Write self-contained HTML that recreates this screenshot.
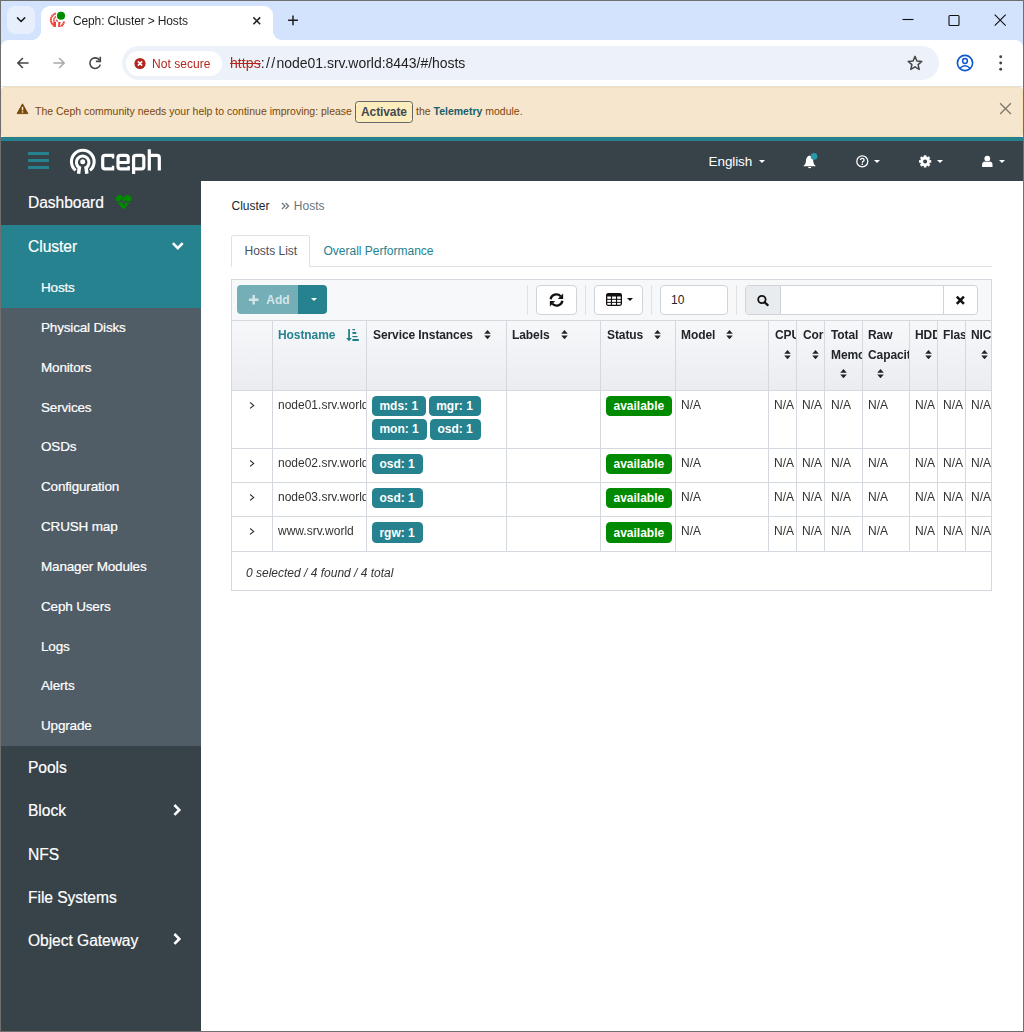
<!DOCTYPE html>
<html>
<head>
<meta charset="utf-8">
<title>Ceph: Cluster > Hosts</title>
<style>
*{box-sizing:border-box;margin:0;padding:0}
html,body{width:1024px;height:1032px;overflow:hidden;background:#fff}
body{font-family:"Liberation Sans",sans-serif;font-size:12px;color:#212529;position:relative}
div,span,svg{position:absolute}
.t{white-space:nowrap;line-height:1}
#frame{left:0;top:0;width:1024px;height:1032px;border:1px solid #6f6f6f;z-index:99}
/* ---------- browser chrome ---------- */
#tabstrip{left:0;top:0;width:1024px;height:52px;background:#d3e3fd}
#tabsearch{left:7px;top:6px;width:28px;height:28px;border-radius:8px;background:#e7effd}
#tab{left:41px;top:6px;width:232px;height:34px;background:#fff;border-radius:9px 9px 0 0}
#tab:before,#tab:after{content:"";position:absolute;bottom:0;width:9px;height:9px}
#tab:before{left:-9px;background:radial-gradient(circle at 0 0,rgba(255,255,255,0) 8.6px,#fff 9.2px)}
#tab:after{right:-9px;background:radial-gradient(circle at 100% 0,rgba(255,255,255,0) 8.6px,#fff 9.2px)}
#tabtitle{will-change:transform;left:73px;top:15px;font-size:12px;color:#1f1f1f;letter-spacing:-0.14px}
#toolbar{left:1px;top:40px;width:1022px;height:46px;background:#fff;border-radius:7.5px 7.5px 0 0}
#omni{left:121.5px;top:46px;width:817px;height:34px;border-radius:17px;background:#edf2fa}
#chip{left:126px;top:51px;width:96px;height:24.5px;border-radius:12.25px;background:#fff}
#chiptxt{will-change:transform;left:152.1px;top:57.5px;font-size:12px;color:#b3261e;letter-spacing:0.05px}
#url{will-change:transform;left:230px;top:56px;font-size:14px;color:#1f1f1f;letter-spacing:0.08px}
#url s{color:#b3261e}
/* ---------- notification ---------- */
#nline{left:0;top:86px;width:1024px;height:1px;background:#dfe2e0}
#notif{left:1px;top:87px;width:1022px;height:50px;background:#f5e6cd;border:1px solid #f6deb6;border-radius:3.5px}
#ntxt{left:35px;top:105.5px;font-size:10.5px;color:#7a470b}
#nbtn{left:355px;top:101px;width:58px;height:22px;border:1px solid #62666a;border-radius:3.5px;background:#fdedbd}
#nbtn span{left:5px;top:4px;font-size:12px;font-weight:bold;color:#424a52;letter-spacing:-0.1px}
#ntxt2{left:416px;top:105.5px;font-size:10.5px;color:#7a470b}
#ntxt2 b{color:#1b5e69}
#tealbar{left:0;top:137px;width:1024px;height:4px;background:#25828e}
/* ---------- navbar ---------- */
#navbar{left:0;top:141px;width:1024px;height:40px;background:#374249}
.caret{width:0;height:0;border-left:3.2px solid transparent;border-right:3.2px solid transparent;border-top:3.2px solid #fff}
.nv{font-size:13.5px;color:#fff}
/* ---------- sidebar ---------- */
#side{left:0;top:181px;width:201px;height:851px;background:#374249}
#cluster{left:0;top:224.5px;width:201px;height:83.3px;background:#25828e}
#submenu{left:0;top:307.8px;width:201px;height:437.8px;background:#505c66}
.top{-webkit-text-stroke:0.2px #fff;left:28px;font-size:15.6px;color:#fff;letter-spacing:-0.05px}
.sub{-webkit-text-stroke:0.2px #fff;left:41px;font-size:13.5px;color:#fff;letter-spacing:-0.17px}
/* ---------- content ---------- */
#content{left:201px;top:181px;width:823px;height:851px;background:#fff}

/* content styles */
.bc{font-size:12px}
#tabline{left:231px;top:266px;width:761px;height:1px;background:#dee2e6}
#acttab{left:231px;top:235px;width:79px;height:32px;border:1px solid #dee2e6;border-bottom:none;border-radius:3px 3px 0 0;background:#fff}
#tbl{left:231px;top:279px;width:761px;height:312px;border:1px solid #d4d8df;background:#fff;overflow:hidden}
#tbar{left:0;top:0;width:759px;height:40px;background:#f7f8fa}
#thead{left:0;top:40px;width:759px;height:71px;border-top:1px solid #d4d8df;border-bottom:1px solid #d4d8df;background:linear-gradient(#f7f8fa,#eaecf0)}
.vl{top:40px;width:1px;height:231px;background:#d4d8df}
.hl{left:0;width:759px;height:1px;background:#d4d8df}
.sep{top:5px;width:1px;height:30px;background:#dfe2e7}
.btnw{background:#fff;border:1px solid #ced4da;border-radius:4px;top:5px;height:30px}
.cell{overflow:hidden;height:60px}
.th{will-change:transform;letter-spacing:-0.09px;font-weight:bold;font-size:12px;color:#212529;line-height:20px;white-space:nowrap;top:0;left:0}
.td{will-change:transform;font-size:12px;color:#333;white-space:nowrap;line-height:1}
.bdg{height:20.4px;border-radius:4.3px;background:#25828e;color:#fff;font-weight:bold;font-size:12px;line-height:20.4px;padding:0 8.3px 0 7.3px;white-space:nowrap}
.bdg.g{background:#008a00}
.srt{width:7px;height:9.3px}
</style>
</head>
<body>
<!-- ================= BROWSER CHROME ================= -->
<div id="tabstrip"></div>
<div id="tabsearch"></div>
<svg style="left:7px;top:6px" width="28" height="28" viewBox="0 0 28 28"><path d="M10.5 11.9 L14.1 15.5 L17.7 11.9" fill="none" stroke="#1f1f1f" stroke-width="1.5" stroke-linecap="round" stroke-linejoin="miter"/></svg>
<div id="tab"></div>
<!-- favicon -->
<svg style="left:49px;top:11px" width="18" height="18" viewBox="0 0 18 18">
  <g fill="none" stroke="#ef4136">
    <path d="M6.9 2.55 A6.55 6.55 0 0 0 4.7 14.3" stroke-width="2.0" stroke-dasharray="1.6 0.3"/>
    <path d="M7.0 5.7 A3.5 3.5 0 0 0 5.5 10.9" stroke-width="1.6" stroke-dasharray="1.6 0.3"/>
    <path d="M7.2 8.8 L8.8 10.6" stroke-width="1.3"/>
    <path d="M12.4 15.2 Q14.4 13.2 15.1 10.4" stroke-width="2.1" stroke-dasharray="1.6 0.3"/>
  </g>
  <rect x="4.3" y="10.8" width="2.7" height="5.1" fill="#ef4136"/>
  <path d="M9.2 11 H12 L11.2 12.2 V14.6 L12 15.9 H9.2 Z" fill="#ef4136"/>
  <circle cx="12" cy="4.8" r="4.05" fill="#008a00"/>
</svg>
<div id="tabtitle" class="t">Ceph: Cluster &gt; Hosts</div>
<svg style="left:250px;top:14px" width="14" height="14" viewBox="0 0 14 14"><path d="M3.4 3.4 L10.2 10.2 M10.2 3.4 L3.4 10.2" stroke="#1f1f1f" stroke-width="1.5" fill="none"/></svg>
<svg style="left:285px;top:12px" width="16" height="16" viewBox="0 0 16 16"><path d="M8 3.4 V13.2 M3.1 8.3 H12.9" stroke="#1f1f1f" stroke-width="1.5" fill="none"/></svg>
<!-- window controls -->
<svg style="left:896px;top:8px" width="120" height="24" viewBox="0 0 120 24">
  <path d="M6.5 11.5 H17.5" stroke="#111" stroke-width="1.1" fill="none"/>
  <rect x="53" y="7.5" width="10" height="10" rx="1" fill="none" stroke="#111" stroke-width="1.1"/>
  <path d="M98.7 6.7 L109.7 17.7 M109.7 6.7 L98.7 17.7" stroke="#111" stroke-width="1.1" fill="none"/>
</svg>
<div id="toolbar"></div>
<!-- back / forward / reload -->
<svg style="left:14px;top:54px" width="18" height="18" viewBox="0 0 18 18"><path d="M14.6 9 H4.2 M8.9 4 L3.9 9 L8.9 14" fill="none" stroke="#444746" stroke-width="1.6" stroke-linejoin="miter"/></svg>
<svg style="left:50px;top:54px" width="18" height="18" viewBox="0 0 18 18"><path d="M3.4 9 H13.8 M9.1 4 L14.1 9 L9.1 14" fill="none" stroke="#a8abaa" stroke-width="1.6"/></svg>
<svg style="left:86px;top:54px" width="18" height="18" viewBox="0 0 18 18"><path d="M13.6 6.2 A5.3 5.3 0 1 0 14.3 10.6" fill="none" stroke="#444746" stroke-width="1.6"/><path d="M14.3 2.8 V7.4 H9.9" fill="none" stroke="#444746" stroke-width="1.6"/></svg>
<div id="omni"></div>
<div id="chip"></div>
<svg style="left:133px;top:57px" width="14" height="14" viewBox="0 0 14 14"><circle cx="7" cy="6.5" r="5.6" fill="#b3261e"/><path d="M4.9 4.4 L9.1 8.6 M9.1 4.4 L4.9 8.6" stroke="#fff" stroke-width="1.5"/></svg>
<div id="chiptxt" class="t">Not secure</div>
<div id="url" class="t"><s>https</s><span style="position:static;letter-spacing:1.38px">://</span><span style="position:static;letter-spacing:-0.03px">node01.srv.world:8443/#/hosts</span></div>
<!-- star -->
<svg style="left:906px;top:54px" width="18" height="18" viewBox="0 0 18 18"><path d="M9 2.4 L10.9 7.0 L15.8 7.4 L12.1 10.6 L13.2 15.4 L9 12.8 L4.8 15.4 L5.9 10.6 L2.2 7.4 L7.1 7.0 Z" fill="none" stroke="#444746" stroke-width="1.5" stroke-linejoin="round"/></svg>
<!-- profile -->
<svg style="left:955px;top:53px" width="20" height="20" viewBox="0 0 20 20"><circle cx="10" cy="10" r="7.6" fill="none" stroke="#0b57d0" stroke-width="1.6"/><circle cx="10" cy="8" r="2.4" fill="none" stroke="#0b57d0" stroke-width="1.5"/><path d="M4.9 15.2 Q10 10.4 15.1 15.2" fill="none" stroke="#0b57d0" stroke-width="1.5"/></svg>
<svg style="left:996px;top:53px" width="10" height="20" viewBox="0 0 10 20"><circle cx="4.7" cy="3.7" r="1.45" fill="#444746"/><circle cx="4.7" cy="10" r="1.45" fill="#444746"/><circle cx="4.7" cy="16.3" r="1.45" fill="#444746"/></svg>

<!-- ================= NOTIFICATION ================= -->
<div id="nline"></div><div id="notif"></div>
<svg style="left:15.6px;top:102.6px" width="13" height="12.1" viewBox="0 0 14 13"><path d="M7 0.9 L12.8 11.4 H1.2 Z" fill="#7a470b" stroke="#7a470b" stroke-width="1" stroke-linejoin="round"/><rect x="6.2" y="4.1" width="1.6" height="3.9" fill="#f5e6cd"/><rect x="6.2" y="8.9" width="1.6" height="1.5" fill="#f5e6cd"/></svg>
<div id="ntxt" class="t">The Ceph community needs your help to continue improving: please</div>
<div id="nbtn"><span class="t">Activate</span></div>
<div id="ntxt2" class="t">the <b>Telemetry</b> module.</div>
<svg style="left:998px;top:101px" width="14" height="14" viewBox="0 0 14 14"><path d="M2.1 2.2 L12.9 13 M12.9 2.2 L2.1 13" stroke="#7d776c" stroke-width="1.3" fill="none"/></svg>
<div id="tealbar"></div>

<!-- ================= NAVBAR ================= -->
<div id="navbar"></div>
<div style="left:28px;top:152.3px;width:21px;height:3px;background:#25828e;border-radius:.5px"></div>
<div style="left:28px;top:159px;width:21px;height:3px;background:#25828e;border-radius:.5px"></div>
<div style="left:28px;top:165.6px;width:21px;height:3px;background:#25828e;border-radius:.5px"></div>
<!-- ceph logo -->
<svg style="left:66px;top:144px" width="100" height="34" viewBox="66 144 100 34" fill="none" stroke="#fff" stroke-linecap="butt">
  <path d="M75.6 170.4 A11.35 11.35 0 1 1 90.0 170.4" stroke-width="3.05"/>
  <path d="M79.3 167.6 A6.3 6.3 0 1 1 86.1 167.6" stroke-width="3.1"/>
  <path d="M78.55 173.8 L79.5 166.2 M86.85 173.8 L85.9 166.2" stroke-width="3.5"/>
  <circle cx="82.7" cy="161.8" r="2.5" fill="#fff" stroke="none"/>
  <g stroke-width="3.2" stroke-linejoin="round">
    <path d="M114.2 155.3 H105.1 Q102.7 155.3 102.7 157.7 V166.5 Q102.7 168.9 105.1 168.9 H114.2"/>
    <path d="M113.0 155.3 V158.4 M113.0 168.9 V165.8" stroke-width="2.4"/>
    <path d="M129.8 168.9 H120.4 Q118.0 168.9 118.0 166.5 V157.7 Q118.0 155.3 120.4 155.3 H125.8 Q128.2 155.3 128.2 157.7 V162.5 H118.0"/>
    <path d="M128.6 168.9 V166.0" stroke-width="2.4"/>
    <path d="M133.6 173.9 V157.7 Q133.6 155.3 136.0 155.3 H141.4 Q143.8 155.3 143.8 157.7 V166.5 Q143.8 168.9 141.4 168.9 H133.6"/>
    <path d="M149.3 149.3 V170.5 M149.3 155.3 H156.9 Q159.3 155.3 159.3 157.7 V170.5"/>
  </g>
</svg>
<div class="t nv" style="left:708.6px;top:155px;letter-spacing:-0.1px">English</div>
<div class="caret" style="left:759px;top:160px"></div>
<!-- bell -->
<svg style="left:800px;top:150px" width="22" height="22" viewBox="0 0 22 22"><path d="M9.6 5.6 Q5.9 6.6 5.9 11.4 Q5.9 14.2 3.3 16.2 H15.9 Q13.3 14.2 13.3 11.4 Q13.3 6.6 9.6 5.6 Z" fill="#fff"/><path d="M8 17 A1.7 1.7 0 0 0 11.3 17 Z" fill="#fff"/><circle cx="14" cy="6.4" r="3.3" fill="#2b99a8"/></svg>
<!-- question -->
<svg style="left:855px;top:154px" width="15" height="15" viewBox="0 0 15 15"><circle cx="7.3" cy="7.4" r="5.5" fill="none" stroke="#fff" stroke-width="1.25"/><path d="M5.5 6.1 Q5.5 4.3 7.3 4.3 Q9.1 4.3 9.1 5.9 Q9.1 6.9 8.1 7.4 Q7.3 7.8 7.3 8.7" fill="none" stroke="#fff" stroke-width="1.3"/><rect x="6.6" y="9.5" width="1.4" height="1.4" fill="#fff"/></svg>
<div class="caret" style="left:874px;top:160px"></div>
<!-- gear -->
<svg style="left:918px;top:154px" width="15" height="15" viewBox="0 0 15 15"><g transform="translate(7.1 7.4)"><circle r="3.5" fill="none" stroke="#fff" stroke-width="2.6"/><g fill="#fff"><rect x="-1.3" y="-6.1" width="2.6" height="12.2"/><rect x="-1.3" y="-6.1" width="2.6" height="12.2" transform="rotate(45)"/><rect x="-1.3" y="-6.1" width="2.6" height="12.2" transform="rotate(90)"/><rect x="-1.3" y="-6.1" width="2.6" height="12.2" transform="rotate(135)"/></g><circle r="2" fill="#374249"/></g></svg>
<div class="caret" style="left:937px;top:160px"></div>
<!-- user -->
<svg style="left:980px;top:154px" width="15" height="15" viewBox="0 0 15 15"><circle cx="7.3" cy="4.6" r="2.9" fill="#fff"/><path d="M2.1 13 V10.6 Q2.1 7.6 5 7.4 Q7.3 8.6 9.6 7.4 Q12.5 7.6 12.5 10.6 V13 Z" fill="#fff"/></svg>
<div class="caret" style="left:999px;top:160px"></div>

<!-- ================= SIDEBAR ================= -->
<div id="side"></div>
<div id="cluster"></div>
<div id="submenu"></div>
<div class="t top" style="top:195.0px">Dashboard</div>
<div class="t top" style="top:238.7px">Cluster</div>
<div class="t top" style="top:759.8px">Pools</div>
<div class="t top" style="top:803.1px">Block</div>
<div class="t top" style="top:847.4px">NFS</div>
<div class="t top" style="top:889.6px">File Systems</div>
<div class="t top" style="top:932.9px">Object Gateway</div>
<div class="t sub" style="top:280.8px">Hosts</div>
<div class="t sub" style="top:320.8px">Physical Disks</div>
<div class="t sub" style="top:360.8px">Monitors</div>
<div class="t sub" style="top:400.8px">Services</div>
<div class="t sub" style="top:439.8px">OSDs</div>
<div class="t sub" style="top:479.8px">Configuration</div>
<div class="t sub" style="top:519.8px">CRUSH map</div>
<div class="t sub" style="top:559.8px">Manager Modules</div>
<div class="t sub" style="top:599.8px">Ceph Users</div>
<div class="t sub" style="top:639.8px">Logs</div>
<div class="t sub" style="top:678.8px">Alerts</div>
<div class="t sub" style="top:718.8px">Upgrade</div>
<svg style="left:113.8px;top:192.9px" width="19.2" height="17.9" viewBox="0 0 19 17" preserveAspectRatio="none"><path d="M9.5 15.6 L2.6 8.6 Q0.6 6.2 2.2 3.6 Q3.6 1.6 6.0 2.0 Q8.2 2.4 9.5 4.4 Q10.8 2.4 13.0 2.0 Q15.4 1.6 16.8 3.6 Q18.4 6.2 16.4 8.6 Z" fill="#008a00"/><path d="M1.2 8.4 H6.2 L7.6 5.6 L9.6 11.2 L11.2 7.4 L12 8.4 H17.8" fill="none" stroke="#374249" stroke-width="1.1" stroke-linejoin="round"/></svg>
<svg style="left:170px;top:240px" width="16" height="12" viewBox="0 0 16 12"><path d="M2.9 3.2 L7.8 8.1 L12.7 3.2" fill="none" stroke="#fff" stroke-width="2.6"/></svg>
<svg style="left:171px;top:801.6px" width="12" height="16" viewBox="0 0 12 16"><path d="M3.4 3.0 L8.3 7.9 L3.4 12.8" fill="none" stroke="#fff" stroke-width="2.6"/></svg>
<svg style="left:171px;top:931.4px" width="12" height="16" viewBox="0 0 12 16"><path d="M3.4 3.0 L8.3 7.9 L3.4 12.8" fill="none" stroke="#fff" stroke-width="2.6"/></svg>
<!--SIDEBAR_ITEMS_END-->

<!-- ================= CONTENT ================= -->
<div id="content"></div>
<div class="t bc" style="left:231.5px;top:199.8px;color:#212529">Cluster</div>
<svg style="left:281px;top:202px" width="9" height="8" viewBox="0 0 9 8"><path d="M1 1 L4 4 L1 7 M4.6 1 L7.6 4 L4.6 7" fill="none" stroke="#6c757d" stroke-width="1.25"/></svg>
<div class="t bc" style="left:293.8px;top:199.8px;color:#6c757d">Hosts</div>
<div id="tabline"></div><div id="acttab"></div>
<div class="t bc" style="left:244.5px;top:244.8px;color:#495057">Hosts List</div>
<div class="t bc" style="left:323.5px;top:244.8px;color:#25828e">Overall Performance</div>
<div id="tbl">
<div id="tbar"></div>
<div style="left:5px;top:5px;width:61px;height:29px;background:#74aeb6;border-radius:4px 0 0 4px"></div>
<div style="left:66px;top:5px;width:29px;height:29px;background:#25828e;border-radius:0 4px 4px 0"></div>
<svg style="left:16px;top:14px" width="12" height="12" viewBox="0 0 12 12"><path d="M5.7 1 V10.6 M0.9 5.8 H10.5" stroke="#d5e6e9" stroke-width="2.4" fill="none"/></svg>
<div class="t" style="left:34.3px;top:13.8px;font-weight:bold;font-size:12px;color:#d5e6e9">Add</div>
<div class="caret" style="left:78.8px;top:18.3px"></div>
<div class="sep" style="left:295px"></div>
<div class="sep" style="left:353px"></div>
<div class="sep" style="left:419px"></div>
<div class="sep" style="left:504px"></div>
<div class="btnw" style="left:304px;width:41px"></div>
<svg style="left:316px;top:12px" width="17" height="16" viewBox="0 0 17 16"><g fill="none" stroke="#111" stroke-width="2.3"><path d="M2.6 7.2 A5.9 5.6 0 0 1 12.7 4.2"/><path d="M14.4 8.8 A5.9 5.6 0 0 1 4.3 11.8"/></g><path d="M15.1 1.6 V6.9 H9.8 Z" fill="#111"/><path d="M1.9 14.4 V9.1 H7.2 Z" fill="#111"/></svg>
<div class="btnw" style="left:362px;width:49px"></div>
<svg style="left:374px;top:13px" width="16" height="13" viewBox="0 0 16 13"><rect x="0.65" y="0.65" width="14.7" height="11.7" rx="1.5" fill="none" stroke="#111" stroke-width="1.3"/><path d="M0.65 3.4 V2 Q0.65 0.65 2 0.65 H14 Q15.35 0.65 15.35 2 V3.4 Z" fill="#111"/><path d="M0.6 6.35 H15.4 M0.6 9.35 H15.4" stroke="#111" stroke-width="1.0" fill="none"/><path d="M5.45 3 V12.2 M10.55 3 V12.2" stroke="#111" stroke-width="1.15" fill="none"/></svg>
<div class="caret" style="left:394.8px;top:18.3px;border-top-color:#111"></div>
<div class="btnw" style="left:428px;width:68px"></div>
<div class="t" style="left:439px;top:14px;font-size:12px;color:#212529">10</div>
<div class="btnw" style="left:513px;width:233px;overflow:hidden"><div style="left:-1px;top:-1px;width:36px;height:30px;background:#e9ecef;border-right:1px solid #ced4da"></div><div style="left:197px;top:-1px;width:1px;height:30px;background:#ced4da"></div></div>
<svg style="left:524px;top:14px" width="15" height="14" viewBox="0 0 15 14"><circle cx="5.9" cy="5.5" r="3.7" fill="none" stroke="#111" stroke-width="1.8"/><path d="M8.6 8.2 L11.7 11.1" stroke="#111" stroke-width="2.2" stroke-linecap="round"/></svg>
<svg style="left:723px;top:15px" width="11" height="11" viewBox="0 0 11 11"><path d="M1.8 1.7 L8.9 8.8 M8.9 1.7 L1.8 8.8" stroke="#111" stroke-width="2.5" fill="none"/></svg>
<div id="thead"></div>
<div class="vl" style="left:40px"></div>
<div class="vl" style="left:134px"></div>
<div class="vl" style="left:274px"></div>
<div class="vl" style="left:368px"></div>
<div class="vl" style="left:443px"></div>
<div class="vl" style="left:536px"></div>
<div class="vl" style="left:564px"></div>
<div class="vl" style="left:592px"></div>
<div class="vl" style="left:630px"></div>
<div class="vl" style="left:677px"></div>
<div class="vl" style="left:705px"></div>
<div class="vl" style="left:733px"></div>
<div class="hl" style="top:168px"></div>
<div class="hl" style="top:202px"></div>
<div class="hl" style="top:236px"></div>
<div class="hl" style="top:271px"></div>
<div class="cell" style="left:46.0px;top:45px;width:88.0px"><div class="th" style="color:#25828e;">Hostname</div></div>
<div class="cell" style="left:140.8px;top:45px;width:133.2px"><div class="th" style="">Service Instances</div></div>
<svg class="srt" style="left:252.2px;top:49.6px" viewBox="0 0 7 10"><path d="M0 4 L3.5 0 L7 4 Z M0 6 L3.5 10 L7 6 Z" fill="#212529"/></svg>
<div class="cell" style="left:280.2px;top:45px;width:87.8px"><div class="th" style="">Labels</div></div>
<svg class="srt" style="left:328.8px;top:49.6px" viewBox="0 0 7 10"><path d="M0 4 L3.5 0 L7 4 Z M0 6 L3.5 10 L7 6 Z" fill="#212529"/></svg>
<div class="cell" style="left:374.6px;top:45px;width:68.4px"><div class="th" style="">Status</div></div>
<svg class="srt" style="left:421.8px;top:49.6px" viewBox="0 0 7 10"><path d="M0 4 L3.5 0 L7 4 Z M0 6 L3.5 10 L7 6 Z" fill="#212529"/></svg>
<div class="cell" style="left:448.8px;top:45px;width:87.2px"><div class="th" style="">Model</div></div>
<svg class="srt" style="left:494.0px;top:49.6px" viewBox="0 0 7 10"><path d="M0 4 L3.5 0 L7 4 Z M0 6 L3.5 10 L7 6 Z" fill="#212529"/></svg>
<div class="cell" style="left:542.5px;top:45px;width:21.5px"><div class="th" style="">CPUs</div></div>
<svg class="srt" style="left:551.9px;top:69.6px" viewBox="0 0 7 10"><path d="M0 4 L3.5 0 L7 4 Z M0 6 L3.5 10 L7 6 Z" fill="#212529"/></svg>
<div class="cell" style="left:570.5px;top:45px;width:21.5px"><div class="th" style="">Cores</div></div>
<svg class="srt" style="left:579.9px;top:69.6px" viewBox="0 0 7 10"><path d="M0 4 L3.5 0 L7 4 Z M0 6 L3.5 10 L7 6 Z" fill="#212529"/></svg>
<div class="cell" style="left:598.6px;top:45px;width:31.4px"><div class="th" style="">Total<br>Memory</div></div>
<svg class="srt" style="left:608.1px;top:88.9px" viewBox="0 0 7 10"><path d="M0 4 L3.5 0 L7 4 Z M0 6 L3.5 10 L7 6 Z" fill="#212529"/></svg>
<div class="cell" style="left:636.2px;top:45px;width:40.8px"><div class="th" style="">Raw<br>Capacity</div></div>
<svg class="srt" style="left:645.4px;top:88.9px" viewBox="0 0 7 10"><path d="M0 4 L3.5 0 L7 4 Z M0 6 L3.5 10 L7 6 Z" fill="#212529"/></svg>
<div class="cell" style="left:683.1px;top:45px;width:21.9px"><div class="th" style="">HDDs</div></div>
<svg class="srt" style="left:692.5px;top:69.6px" viewBox="0 0 7 10"><path d="M0 4 L3.5 0 L7 4 Z M0 6 L3.5 10 L7 6 Z" fill="#212529"/></svg>
<div class="cell" style="left:711.2px;top:45px;width:21.8px"><div class="th" style="">Flash</div></div>
<div class="cell" style="left:739.3px;top:45px;width:20.7px"><div class="th" style="">NICs</div></div>
<svg class="srt" style="left:748.8px;top:69.6px" viewBox="0 0 7 10"><path d="M0 4 L3.5 0 L7 4 Z M0 6 L3.5 10 L7 6 Z" fill="#212529"/></svg>
<svg style="left:114.1px;top:49px" width="14" height="13" viewBox="0 0 14 13"><g fill="#1b7c88"><rect x="2.2" y="0" width="1.7" height="9.4"/><path d="M0.2 8.9 H5.8 L3.05 12.2 Z"/><rect x="6.4" y="0" width="2.6" height="1.2"/><rect x="6.4" y="3" width="3.9" height="1.9"/><rect x="6.4" y="7" width="5.1" height="1.2"/><rect x="6.4" y="10" width="6.4" height="2"/></g></svg>
<svg style="left:16.6px;top:121.4px" width="7" height="9" viewBox="0 0 7 9"><path d="M1.0 1.3 L5.0 4.6 L1.0 7.9" fill="none" stroke="#2b2b2b" stroke-width="1.2" transform="translate(0.2 0.3) scale(0.9)"/></svg>
<div class="cell" style="left:46px;top:116.8px;width:88px;height:18px"><div class="td" style="left:0;top:2px">node01.srv.world</div></div>
<div class="bdg" style="left:140.1px;top:116.0px">mds: 1</div>
<div class="bdg" style="left:196.9px;top:116.0px">mgr: 1</div>
<div class="bdg" style="left:140.1px;top:139.3px">mon: 1</div>
<div class="bdg" style="left:198.1px;top:139.3px">osd: 1</div>
<div class="bdg g" style="left:374.2px;top:116.0px">available</div>
<div class="cell" style="left:448.6px;top:116.8px;width:87.4px;height:18px"><div class="td" style="left:0;top:2px">N/A</div></div>
<div class="cell" style="left:542.4px;top:116.8px;width:21.6px;height:18px"><div class="td" style="left:0;top:2px">N/A</div></div>
<div class="cell" style="left:570.4px;top:116.8px;width:21.6px;height:18px"><div class="td" style="left:0;top:2px">N/A</div></div>
<div class="cell" style="left:598.5px;top:116.8px;width:31.5px;height:18px"><div class="td" style="left:0;top:2px">N/A</div></div>
<div class="cell" style="left:636.2px;top:116.8px;width:40.8px;height:18px"><div class="td" style="left:0;top:2px">N/A</div></div>
<div class="cell" style="left:683.0px;top:116.8px;width:22.0px;height:18px"><div class="td" style="left:0;top:2px">N/A</div></div>
<div class="cell" style="left:711.1px;top:116.8px;width:21.9px;height:18px"><div class="td" style="left:0;top:2px">N/A</div></div>
<div class="cell" style="left:739.2px;top:116.8px;width:20.8px;height:18px"><div class="td" style="left:0;top:2px">N/A</div></div>
<svg style="left:16.6px;top:179.4px" width="7" height="9" viewBox="0 0 7 9"><path d="M1.0 1.3 L5.0 4.6 L1.0 7.9" fill="none" stroke="#2b2b2b" stroke-width="1.2" transform="translate(0.2 0.3) scale(0.9)"/></svg>
<div class="cell" style="left:46px;top:174.8px;width:88px;height:18px"><div class="td" style="left:0;top:2px">node02.srv.world</div></div>
<div class="bdg" style="left:140.1px;top:173.8px">osd: 1</div>
<div class="bdg g" style="left:374.2px;top:173.8px">available</div>
<div class="cell" style="left:448.6px;top:174.8px;width:87.4px;height:18px"><div class="td" style="left:0;top:2px">N/A</div></div>
<div class="cell" style="left:542.4px;top:174.8px;width:21.6px;height:18px"><div class="td" style="left:0;top:2px">N/A</div></div>
<div class="cell" style="left:570.4px;top:174.8px;width:21.6px;height:18px"><div class="td" style="left:0;top:2px">N/A</div></div>
<div class="cell" style="left:598.5px;top:174.8px;width:31.5px;height:18px"><div class="td" style="left:0;top:2px">N/A</div></div>
<div class="cell" style="left:636.2px;top:174.8px;width:40.8px;height:18px"><div class="td" style="left:0;top:2px">N/A</div></div>
<div class="cell" style="left:683.0px;top:174.8px;width:22.0px;height:18px"><div class="td" style="left:0;top:2px">N/A</div></div>
<div class="cell" style="left:711.1px;top:174.8px;width:21.9px;height:18px"><div class="td" style="left:0;top:2px">N/A</div></div>
<div class="cell" style="left:739.2px;top:174.8px;width:20.8px;height:18px"><div class="td" style="left:0;top:2px">N/A</div></div>
<svg style="left:16.6px;top:213.4px" width="7" height="9" viewBox="0 0 7 9"><path d="M1.0 1.3 L5.0 4.6 L1.0 7.9" fill="none" stroke="#2b2b2b" stroke-width="1.2" transform="translate(0.2 0.3) scale(0.9)"/></svg>
<div class="cell" style="left:46px;top:208.8px;width:88px;height:18px"><div class="td" style="left:0;top:2px">node03.srv.world</div></div>
<div class="bdg" style="left:140.1px;top:207.8px">osd: 1</div>
<div class="bdg g" style="left:374.2px;top:207.8px">available</div>
<div class="cell" style="left:448.6px;top:208.8px;width:87.4px;height:18px"><div class="td" style="left:0;top:2px">N/A</div></div>
<div class="cell" style="left:542.4px;top:208.8px;width:21.6px;height:18px"><div class="td" style="left:0;top:2px">N/A</div></div>
<div class="cell" style="left:570.4px;top:208.8px;width:21.6px;height:18px"><div class="td" style="left:0;top:2px">N/A</div></div>
<div class="cell" style="left:598.5px;top:208.8px;width:31.5px;height:18px"><div class="td" style="left:0;top:2px">N/A</div></div>
<div class="cell" style="left:636.2px;top:208.8px;width:40.8px;height:18px"><div class="td" style="left:0;top:2px">N/A</div></div>
<div class="cell" style="left:683.0px;top:208.8px;width:22.0px;height:18px"><div class="td" style="left:0;top:2px">N/A</div></div>
<div class="cell" style="left:711.1px;top:208.8px;width:21.9px;height:18px"><div class="td" style="left:0;top:2px">N/A</div></div>
<div class="cell" style="left:739.2px;top:208.8px;width:20.8px;height:18px"><div class="td" style="left:0;top:2px">N/A</div></div>
<svg style="left:16.6px;top:247.4px" width="7" height="9" viewBox="0 0 7 9"><path d="M1.0 1.3 L5.0 4.6 L1.0 7.9" fill="none" stroke="#2b2b2b" stroke-width="1.2" transform="translate(0.2 0.3) scale(0.9)"/></svg>
<div class="cell" style="left:46px;top:242.8px;width:88px;height:18px"><div class="td" style="left:0;top:2px">www.srv.world</div></div>
<div class="bdg" style="left:140.1px;top:242.1px;height:21.3px;line-height:23.2px">rgw: 1</div>
<div class="bdg g" style="left:374.2px;top:242.1px;height:21.3px;line-height:23.2px">available</div>
<div class="cell" style="left:448.6px;top:242.8px;width:87.4px;height:18px"><div class="td" style="left:0;top:2px">N/A</div></div>
<div class="cell" style="left:542.4px;top:242.8px;width:21.6px;height:18px"><div class="td" style="left:0;top:2px">N/A</div></div>
<div class="cell" style="left:570.4px;top:242.8px;width:21.6px;height:18px"><div class="td" style="left:0;top:2px">N/A</div></div>
<div class="cell" style="left:598.5px;top:242.8px;width:31.5px;height:18px"><div class="td" style="left:0;top:2px">N/A</div></div>
<div class="cell" style="left:636.2px;top:242.8px;width:40.8px;height:18px"><div class="td" style="left:0;top:2px">N/A</div></div>
<div class="cell" style="left:683.0px;top:242.8px;width:22.0px;height:18px"><div class="td" style="left:0;top:2px">N/A</div></div>
<div class="cell" style="left:711.1px;top:242.8px;width:21.9px;height:18px"><div class="td" style="left:0;top:2px">N/A</div></div>
<div class="cell" style="left:739.2px;top:242.8px;width:20.8px;height:18px"><div class="td" style="left:0;top:2px">N/A</div></div>
<div class="td" style="left:13.6px;top:286.8px;font-style:italic">0 selected / 4 found / 4 total</div>
</div>
<!--CONTENT_ITEMS_END-->

<div id="frame"></div>
</body>
</html>
